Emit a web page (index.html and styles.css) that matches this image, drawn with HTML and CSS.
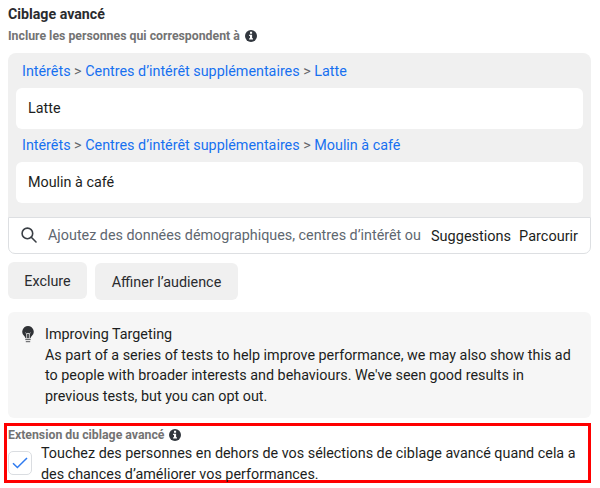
FILE: index.html
```
<!DOCTYPE html>
<html lang="fr">
<head>
  <meta charset="UTF-8">
  <meta name="viewport" content="width=device-width, initial-scale=1.0">
  <title>Ciblage avancé</title>
  <link rel="stylesheet" href="styles.css">
</head>
<body>

<div class="targeting">
  <h2>Ciblage avancé</h2>
  <div class="label">
    <span>Inclure les personnes qui correspondent à</span>
    <svg class="info-icon" viewBox="0 0 12 12">
      <circle cx="6" cy="6" r="6" fill="#32373e"/>
      <path d="M5 1.8h2.1v1.9H5zM4.1 4.8h3v3.5h.9v1.3H4.1V8.3H5V6h-.9z" fill="#fff"/>
    </svg>
  </div>

  <div class="interests">
    <div class="crumbs"><a>Intérêts</a> &gt; <a>Centres d’intérêt supplémentaires</a> &gt; <a>Latte</a></div>
    <div class="item">Latte</div>
    <div class="crumbs"><a>Intérêts</a> &gt; <a>Centres d’intérêt supplémentaires</a> &gt; <a>Moulin à café</a></div>
    <div class="item">Moulin à café</div>
  </div>

  <div class="search">
    <svg class="search-icon" viewBox="0 0 16 16" fill="none" stroke="#3a3f45" stroke-width="1.6" stroke-linecap="round">
      <circle cx="6.4" cy="6.4" r="5.3"/>
      <path d="M10.3 10.3l4.7 4.7"/>
    </svg>
    <span class="placeholder">Ajoutez des données démographiques, centres d’intérêt ou</span>
    <span class="link">Suggestions</span>
    <span class="link">Parcourir</span>
  </div>

  <div class="buttons">
    <button class="exclude">Exclure</button>
    <button class="refine">Affiner l’audience</button>
  </div>

  <div class="notice">
    <svg class="bulb" viewBox="0 0 12 17">
      <path d="M6 0a5.8 5.8 0 0 1 3.8 10.1c-.7.7-1.1 1.2-1.2 2.1H3.4c-.1-.9-.5-1.4-1.2-2.1A5.8 5.8 0 0 1 6 0z" fill="#303236"/>
      <path d="M3.5 6.8l1.4 1.2L6 7l1.1 1 1.4-1.2M4.7 8v4.2M7.3 8v4.2" fill="none" stroke="#e4e4e4" stroke-width=".9"/>
      <path d="M3.3 13.6h5.4M3.8 15.7h4.4" stroke="#55575a" stroke-width="1"/>
    </svg>
    <div class="notice-text">
      Improving Targeting<br>
      As part of a series of tests to help improve performance, we may also show this ad<br>
      to people with broader interests and behaviours. We've seen good results in<br>
      previous tests, but you can opt out.
    </div>
  </div>
</div>

<div class="expansion">
  <div class="label">
    <span>Extension du ciblage avancé</span>
    <svg class="info-icon" viewBox="0 0 12 12">
      <circle cx="6" cy="6" r="6" fill="#32373e"/>
      <path d="M5 1.8h2.1v1.9H5zM4.1 4.8h3v3.5h.9v1.3H4.1V8.3H5V6h-.9z" fill="#fff"/>
    </svg>
  </div>
  <div class="option">
    <span class="checkbox">
      <svg viewBox="0 0 16 12"><path d="M1 6.2l4.4 4.3L15 1" fill="none" stroke="#2f7bf0" stroke-width="1.5"/></svg>
    </span>
    <div class="option-text">
      Touchez des personnes en dehors de vos sélections de ciblage avancé quand cela a<br>
      des chances d’améliorer vos performances.
    </div>
  </div>
</div>

</body>
</html>
```
FILE: styles.css
```
* {
  box-sizing: border-box;
}

body {
  margin: 0;
  background-color: #fff;
  font-family: Roboto, sans-serif;
  font-size: 14.35px;
  color: #1c1e21;
}

.targeting {
  width: 583px;
  margin-left: 8px;
  padding-top: 4px;
}

h2 {
  margin: 0;
  font-size: 14.2px;
  line-height: 20px;
  font-weight: bold;
  color: #2a2b2e;
}

.label {
  display: flex;
  align-items: center;
  gap: 5px;
  height: 24px;
  font-size: 12.3px;
  font-weight: bold;
  color: #737373;
}

.info-icon {
  width: 12px;
  height: 12px;
}

.interests {
  height: 164px;
  margin-top: 5px;
  padding: 0 8px;
  border-radius: 8px 8px 0 0;
  background-color: #f0f0f0;
}

.crumbs {
  height: 35px;
  padding-left: 6px;
  line-height: 38px;
  white-space: nowrap;
  color: #65676b;
}

.interests .item + .crumbs {
  height: 33px;
  line-height: 34px;
}

.crumbs a {
  color: #1770f0;
}

.item {
  height: 41px;
  padding-left: 12px;
  border-radius: 6px;
  line-height: 42px;
  background-color: #fff;
}

.search {
  display: flex;
  align-items: center;
  height: 37px;
  padding-left: 12px;
  border: 1px solid #dddfe2;
  border-radius: 0 0 7px 7px;
  white-space: nowrap;
}

.search-icon {
  width: 16px;
  height: 16px;
  margin-top: -2px;
}

.placeholder {
  width: 383px;
  margin-left: 11px;
  color: #606770;
}

.link {
  padding-top: 2px;
  margin-right: 8px;
  font-size: 14.5px;
}

.buttons {
  display: flex;
  gap: 8px;
  margin-top: 8px;
}

.buttons button {
  height: 37px;
  padding: 2px 0 0;
  border: none;
  border-radius: 6px;
  background-color: #f0f0f0;
  color: #2a2b2e;
  font: inherit;
}

.exclude {
  width: 79px;
}

.buttons .refine {
  width: 143px;
  margin-top: 1px;
}

.notice {
  display: flex;
  height: 106px;
  margin-top: 12px;
  padding: 13px 0 0 14px;
  border-radius: 6px;
  background-color: #f6f6f6;
}

.bulb {
  width: 12px;
  height: 17px;
  margin-top: 1px;
}

.notice-text {
  margin-left: 11px;
  line-height: 20.6px;
  white-space: nowrap;
}

.expansion {
  width: 587px;
  height: 60px;
  margin: 5px 0 0 4px;
  padding-left: 1px;
  border: 3px solid #fe0000;
}

.expansion .label {
  height: 17px;
}

.option {
  display: flex;
}

.checkbox {
  display: flex;
  align-items: center;
  justify-content: center;
  width: 24px;
  height: 24px;
  margin-top: 8px;
  border: 1px solid #dadde1;
  border-radius: 5px;
}

.checkbox svg {
  width: 16px;
  height: 12px;
}

.option-text {
  margin-left: 9px;
  padding-top: 1px;
  line-height: 20.6px;
  white-space: nowrap;
}
```
